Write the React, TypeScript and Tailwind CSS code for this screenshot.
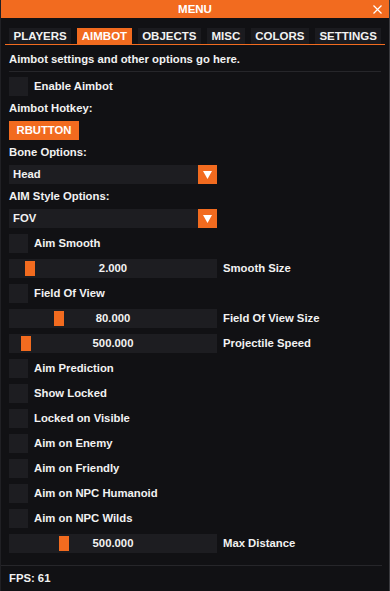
import React from 'react';

const tabs = ['PLAYERS', 'AIMBOT', 'OBJECTS', 'MISC', 'COLORS', 'SETTINGS'];

type Row =
  | { kind: 'check'; label: string }
  | { kind: 'slider'; label: string; value: string; grab: number };

const rows: Row[] = [
  { kind: 'check', label: 'Aim Smooth' },
  { kind: 'slider', label: 'Smooth Size', value: '2.000', grab: 16 },
  { kind: 'check', label: 'Field Of View' },
  { kind: 'slider', label: 'Field Of View Size', value: '80.000', grab: 45 },
  { kind: 'slider', label: 'Projectile Speed', value: '500.000', grab: 12 },
  { kind: 'check', label: 'Aim Prediction' },
  { kind: 'check', label: 'Show Locked' },
  { kind: 'check', label: 'Locked on Visible' },
  { kind: 'check', label: 'Aim on Enemy' },
  { kind: 'check', label: 'Aim on Friendly' },
  { kind: 'check', label: 'Aim on NPC Humanoid' },
  { kind: 'check', label: 'Aim on NPC Wilds' },
  { kind: 'slider', label: 'Max Distance', value: '500.000', grab: 50 },
];

function Checkbox({ label }: { label: string }) {
  return (
    <div className="flex h-[19px] items-center gap-[6px]">
      <div className="h-[19px] w-[19px] bg-[#1d1d21]" />
      <span>{label}</span>
    </div>
  );
}

function Slider({ label, value, grab }: { label: string; value: string; grab: number }) {
  return (
    <div className="flex h-[19px] items-center gap-[6px]">
      <div className="relative flex h-[19px] w-[208px] items-center justify-center bg-[#1d1d21]">
        {/* grab handle */}
        <div
          className="absolute top-[2px] h-[15px] w-[10px] bg-[#f26b1f]"
          style={{ left: grab }}
        />
        <span className="relative">{value}</span>
      </div>
      <span>{label}</span>
    </div>
  );
}

function Combo({ value }: { value: string }) {
  return (
    <div className="flex h-[19px] w-[208px] items-center bg-[#1d1d21]">
      <span className="flex-1 pl-[4px]">{value}</span>
      <div className="flex h-[19px] w-[19px] items-center justify-center bg-[#f26b1f]">
        <svg width="9" height="8" viewBox="0 0 9 8">
          <polygon points="0,0 9,0 4.5,8" fill="#ffffff" />
        </svg>
      </div>
    </div>
  );
}

export default function App() {
  return (
    <div
      className="flex h-[591px] w-[390px] flex-col border-r border-l border-[#3a3a3e] border-l-[#202024] bg-[#111114] text-[11.3px] font-bold leading-[13px] text-[#f2f2f2]"
      style={{ fontFamily: '"Liberation Sans", Arial, sans-serif' }}
    >
      {/* Title bar */}
      <div className="relative flex h-[18px] shrink-0 items-center justify-center bg-[#f26b1f]">
        <span className="text-[11.5px] text-white">MENU</span>
        <svg className="absolute right-[7px] top-[5px]" width="9" height="9" viewBox="0 0 9 9">
          <path d="M0.5 0.5 L8.5 8.5 M8.5 0.5 L0.5 8.5" stroke="#ffffff" strokeWidth="1.2" />
        </svg>
      </div>

      {/* Tabs */}
      <div className="mt-[10px] flex gap-[6px] px-[8px]">
        {tabs.map((t) => (
          <div
            key={t}
            className={
              'flex h-[16px] items-center px-[4.5px] pt-px text-[11.5px] ' +
              (t === 'AIMBOT' ? 'bg-[#f26b1f] text-white' : 'bg-[#1b1b1f]')
            }
          >
            {t}
          </div>
        ))}
      </div>
      <div className="mx-[4px] h-px bg-[#f26b1f]" />

      <div className="flex flex-1 flex-col px-[8px]">
        <div className="mt-[8px] h-[13px]">Aimbot settings and other options go here.</div>
        <div className="mt-[5px] h-px bg-[#26262a]" />

        <div className="mt-[5px] flex flex-col gap-[6px]">
          <Checkbox label="Enable Aimbot" />
          <div className="h-[13px]">Aimbot Hotkey:</div>
          <div className="flex h-[19px] w-[70px] items-center justify-center bg-[#f26b1f] text-white">
            RBUTTON
          </div>
          <div className="h-[13px]">Bone Options:</div>
          <Combo value="Head" />
          <div className="h-[13px]">AIM Style Options:</div>
          <Combo value="FOV" />
          {rows.map((r) =>
            r.kind === 'check' ? (
              <Checkbox key={r.label} label={r.label} />
            ) : (
              <Slider key={r.label} label={r.label} value={r.value} grab={r.grab} />
            )
          )}
        </div>
      </div>

      {/* Footer */}
      <div className="mr-[7px] h-px bg-[#26262a]" />
      <div className="flex h-[25px] items-center px-[8px]">FPS: 61</div>
    </div>
  );
}
